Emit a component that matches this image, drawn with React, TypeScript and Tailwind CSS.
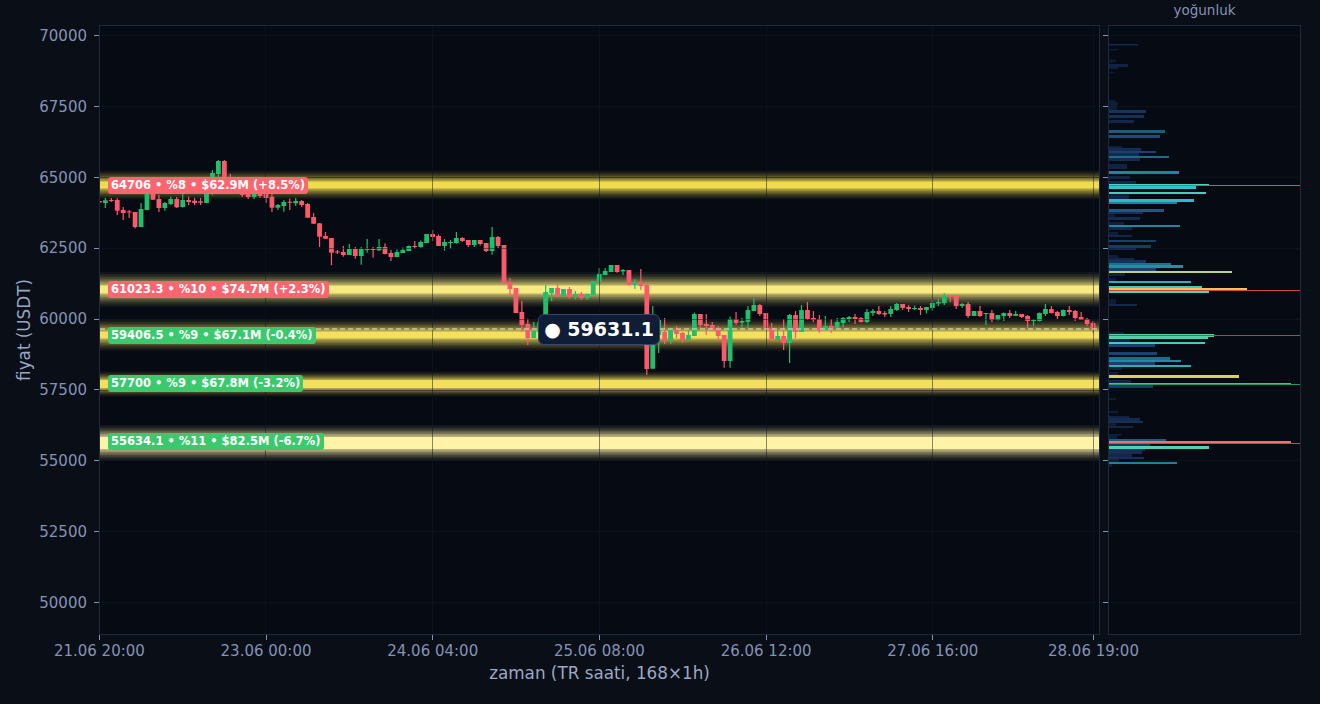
type Candle = [number, number, number, number, number];

// up(1)/down(0), high, body top, body bottom, low - all in page pixels
const candles: Candle[] = [
  [0, 200, 201, 202.5, 204], [1, 198, 200.3, 203, 208], [0, 198, 200, 201, 202], [0, 198, 200, 210.7, 215],
  [0, 207, 210, 213, 220], [0, 210, 211.5, 212.5, 218], [0, 212, 212, 227, 228.5], [1, 203, 209, 227, 227],
  [1, 190, 192, 210, 210], [0, 190, 192, 199.7, 200], [0, 195, 199, 208, 212], [1, 202, 203, 208, 210.7],
  [1, 196.7, 199, 204, 205], [0, 197, 199, 207.3, 208], [1, 194, 200, 207, 207.5], [0, 196.7, 200, 202, 205],
  [0, 198, 200.7, 203, 205], [0, 198, 201.3, 202.7, 205], [1, 190, 190, 203, 203], [1, 170, 173, 190, 195],
  [1, 160, 161, 174, 178], [0, 160, 161, 183, 186], [0, 174, 178, 186, 190], [0, 184, 186, 191, 193],
  [0, 187, 190, 195, 197], [0, 189, 192, 197, 199], [1, 190, 193, 197, 199], [0, 190, 193, 196, 198],
  [0, 190, 194, 198, 203], [0, 194, 196.7, 207.7, 212], [1, 204, 205, 207.7, 210], [1, 200, 202, 206, 211.7],
  [0, 198.5, 201.7, 202.3, 210], [1, 198, 201, 203.3, 206], [0, 200, 201, 205, 207], [0, 203, 204, 217.7, 218],
  [0, 213, 217, 223.7, 224], [0, 223, 223.3, 236.7, 247], [0, 232, 236, 238.7, 239], [0, 238, 238, 252.7, 265.3],
  [0, 250, 251.5, 252.5, 254], [0, 246, 252, 255, 256.7], [1, 244, 249, 255, 255], [0, 247, 249, 256, 258.7],
  [1, 247, 249, 256, 264.7], [1, 239, 249, 249.7, 252.7], [0, 247, 249, 249.7, 257.7], [1, 239, 247, 250.3, 251],
  [0, 243.3, 247, 254, 254.3], [0, 250, 253, 257, 261], [1, 249.5, 252, 257, 257], [1, 247.5, 250, 253, 253],
  [1, 245.5, 246, 251, 251], [0, 241, 246, 246.7, 248.7], [1, 240.5, 242, 247, 247.7], [1, 234, 234, 243, 243],
  [0, 230, 234, 237, 241], [0, 234.5, 236, 246, 246], [1, 239, 242, 246, 250.7], [1, 240, 242, 242.7, 248.7],
  [1, 232, 238, 243, 243.7], [0, 237, 238, 241, 242], [0, 240, 240, 245, 247], [1, 240, 240, 245, 247],
  [0, 240, 240, 244, 245.5], [0, 243, 243, 251, 252], [1, 227, 237, 251, 254.7], [0, 236, 237, 246, 248],
  [0, 245, 245, 283, 284.7], [0, 278, 282, 289, 296], [0, 288, 288, 313, 313], [0, 301, 312, 325, 332],
  [0, 318.7, 324, 338, 345], [1, 322, 331, 338, 338], [1, 318, 322, 332, 340], [1, 285, 292, 330, 330],
  [1, 288, 288, 293, 301], [0, 284, 288, 296, 297], [1, 289, 289, 296, 297], [0, 287, 289, 297, 298.5],
  [1, 291, 294, 296, 299.5], [0, 292, 294, 298, 300], [1, 294, 294, 298, 300], [1, 281, 281, 295, 296],
  [1, 268, 274, 282, 282], [1, 268, 271, 275, 275], [1, 265, 265, 272, 272], [0, 265, 265, 272, 272.7],
  [1, 269, 270, 271.5, 275], [0, 270, 270, 285, 285], [1, 279, 283, 285, 289], [0, 269, 283, 286, 290],
  [0, 282, 285, 369, 375], [1, 306, 330, 368.7, 368.7], [1, 318, 320, 335, 353], [0, 318, 332, 340, 344],
  [1, 328, 330, 340, 344], [0, 326, 330, 334, 338], [0, 332, 333, 340, 343], [1, 328, 335, 340, 340],
  [1, 312.5, 314, 336, 336], [0, 314, 314, 325, 327.7], [0, 314, 324, 326, 335], [0, 322, 325, 330, 331],
  [0, 326, 329, 336, 341], [0, 335, 335, 361, 367.7], [1, 316.7, 319, 361, 367.7], [0, 312, 319, 323, 325],
  [1, 318, 321, 322.7, 328], [1, 306, 310, 322, 328], [1, 298, 305, 311, 311], [0, 304, 305, 314, 316],
  [0, 313, 313, 329, 329], [0, 323, 328, 339, 341], [1, 330, 336, 340, 340], [0, 319, 336, 343, 350],
  [1, 314, 315, 343, 363], [0, 311, 315, 332, 338], [1, 305, 310, 332, 332], [0, 302, 310, 319, 320],
  [0, 311, 318, 320, 322], [0, 315, 319, 330, 333], [1, 316, 326, 330, 330], [0, 319, 326, 328, 333],
  [1, 318, 322, 328, 328], [1, 317, 318, 323, 327], [1, 316, 317, 319, 322], [0, 314, 317, 319, 324],
  [0, 317, 318, 322, 322.5], [1, 309, 312, 322, 323], [1, 309, 311, 313, 316], [0, 306, 311, 314, 315],
  [0, 311, 313, 314.5, 317], [1, 306, 309, 314, 317], [1, 303, 304, 310, 311], [0, 304, 304, 308, 310],
  [0, 305, 307, 309, 312], [1, 305.5, 308, 309, 310], [0, 306, 308, 310, 315], [1, 307, 307, 310, 313.5],
  [1, 300, 303, 308, 311], [1, 299, 302, 303.5, 306], [1, 293, 296, 303, 305], [0, 296, 296, 297, 302],
  [0, 296, 296, 306, 309], [1, 303, 304, 306, 308], [0, 302, 304, 316, 318], [1, 311, 311, 316, 316],
  [0, 306, 311, 316, 317], [1, 313, 313, 314, 325], [0, 310, 313, 320, 322], [1, 315, 315, 320, 320.5],
  [1, 312.5, 313, 316, 321], [0, 310, 313, 316, 318], [1, 311, 314, 316, 316], [0, 314, 314, 317, 318],
  [0, 315, 316, 321, 328], [1, 319, 320, 320.7, 326], [1, 312.5, 313, 321, 321.5], [1, 304, 309, 314, 316],
  [0, 306, 309, 313, 313.5], [0, 311, 312, 316, 319], [1, 309.5, 310, 316, 316.5], [0, 306, 310, 312, 315],
  [0, 310, 311, 318, 321], [0, 312, 317, 320, 320], [0, 318, 319, 324, 326], [0, 321, 323, 329, 333],
];

// center, outer half height, core half height, core colour
const bands: [number, number, number, string][] = [
  [185, 14.5, 3.5, "#f0dc4e"],
  [289.5, 17.5, 4, "#f8ea80"],
  [335, 16, 3.5, "#f3e060"],
  [384, 12.5, 4, "#f3df5e"],
  [443, 18, 6, "#fef3a6"],
];
const glow = [0.05, 0.06, 0.08, 0.1, 0.14, 0.18, 0.24, 0.3];

const priceTicks = ["70000", "67500", "65000", "62500", "60000", "57500", "55000", "52500", "50000"];
const tickYs = [35.5, 106.5, 177.5, 248.5, 319.5, 390.5, 460.5, 531.5, 602.5];
const timeTicks = ["21.06 20:00", "23.06 00:00", "24.06 04:00", "25.06 08:00", "26.06 12:00", "27.06 16:00"];
const gridXs = [265.5, 432.5, 599.5, 766.5, 932.5, 1093.5];

const levels = [
  { text: "64706 • %8 • $62.9M (+8.5%)", cls: "top-[152px] bg-[#fb6570]" },
  { text: "61023.3 • %10 • $74.7M (+2.3%)", cls: "top-[256px] bg-[#fb6570]" },
  { text: "59406.5 • %9 • $67.1M (-0.4%)", cls: "top-[302px] bg-[#3cc86c]" },
  { text: "57700 • %9 • $67.8M (-3.2%)", cls: "top-[350px] bg-[#3cc86c]" },
  { text: "55634.1 • %11 • $82.5M (-6.7%)", cls: "top-[408px] bg-[#3cc86c]" },
];

// y, height, width of each volume bar
const bars: [number, number, number][] = [
  [44, 1.5, 29], [49, 1.5, 9], [59.5, 2.5, 7], [62, 1, 3], [64, 3, 19], [67, 2, 9], [72, 1.5, 5],
  [100, 2, 6], [102, 3, 9], [105, 5, 8], [110, 3, 37], [115, 3, 35], [120, 3, 25], [130, 3, 56], [135, 3, 51],
  [146, 2, 13], [148, 3, 32], [151, 2, 47], [153, 3, 30], [156, 2, 60], [158, 3, 31], [164, 5, 18], [171, 3, 70],
  [176, 3, 21], [181, 3, 27], [184, 2, 100], [186, 3, 87], [192, 2, 97], [194.5, 4.5, 20], [199, 3, 85], [202, 2, 68],
  [209, 3, 55], [212, 2, 34], [214, 3, 6], [217, 3, 31], [222, 3, 15], [225, 2, 71], [227, 3, 23], [232, 3, 9], [235, 2, 23],
  [240, 2, 47], [245, 3, 42], [248, 2, 27], [255, 3, 9], [258, 2, 25], [260, 3, 37], [263, 2, 62], [265, 3, 74],
  [268, 3, 47], [271, 2, 123], [273, 3, 16], [278, 3, 7], [281, 2, 82], [286, 2, 93], [288, 2, 138], [291, 2, 100],
  [299, 5, 7], [304, 2, 28], [332, 2, 15], [334, 3, 105], [337, 2, 99], [339, 3, 21], [342, 2, 96], [344, 3, 46],
  [352, 3, 48], [357, 3, 61], [360, 2, 72], [362, 3, 46], [365, 2, 82], [367, 3, 13], [372, 3, 9], [375, 3, 130],
  [380, 3, 22], [383, 2, 182], [385, 3, 44], [398, 2, 7], [411, 2, 9], [416, 2, 20], [418, 3, 31], [421, 2, 34],
  [423, 3, 7], [426, 2, 24], [434, 2, 12], [436, 3, 8], [439, 2, 57], [441, 3, 182], [444, 2, 41], [446, 3, 100],
  [449, 2, 36], [451, 3, 33], [454, 3, 23], [457, 2, 35], [459, 3, 10], [462, 2, 68], [464, 3, 3],
];

const scale: [number, number[]][] = [
  [0, [12, 24, 46]], [30, [20, 42, 78]], [47, [26, 64, 110]], [62, [30, 112, 144]], [74, [30, 144, 168]],
  [87, [44, 196, 204]], [100, [80, 208, 180]], [105, [92, 208, 156]], [123, [196, 208, 128]], [130, [224, 204, 96]],
  [138, [255, 190, 80]], [182, [240, 112, 112]],
];

function barColor(w: number) {
  let i = 0;
  while (i < scale.length - 2 && w > scale[i + 1][0]) i++;
  const [w0, c0] = scale[i];
  const [w1, c1] = scale[i + 1];
  const t = Math.min(1, (w - w0) / (w1 - w0));
  return `rgb(${c0.map((v, k) => Math.round(v + (c1[k] - v) * t)).join(",")})`;
}

const gridLine = "rgba(14,24,38,0.5)";

function PricePlot() {
  return (
    <svg viewBox="99 25 1001 610" className="block h-full w-full">
      <rect x="99" y="25" width="1001" height="610" fill="#060a13" />
      {bands.map(([c, outer, core, color]) => (
        <g key={c}>
          {glow.map((o, k) => {
            const half = outer - ((outer - core) * k) / glow.length;
            return <rect key={k} x="100" y={c - half} width="999" height={half * 2} fill={color} opacity={o} />;
          })}
          <rect x="100" y={c - core} width="999" height={core * 2} fill={color} />
        </g>
      ))}
      {candles.map(([up, high, top, bottom, low], i) => {
        const x = 99.4 + 5.95 * i;
        const color = up ? "#20bf6b" : "#fb5a6c";
        return (
          <g key={i} fill={color}>
            <rect x={x - 0.6} y={high} width="1.2" height={low - high} />
            <rect x={x - 2.4} y={top} width="4.8" height={Math.max(bottom - top, 1)} />
          </g>
        );
      })}
      {tickYs.map((y) => (
        <line key={y} x1="100" x2="1099" y1={y} y2={y} stroke={gridLine} />
      ))}
      {gridXs.map((x) => (
        <line key={x} x1={x} x2={x} y1="26" y2="634" stroke={gridLine} />
      ))}
      <line x1="100" x2="1099" y1="329" y2="329" stroke="#e2e0cc" strokeOpacity="0.7" strokeWidth="1.3" strokeDasharray="5 3" />
      <rect x="99.5" y="25.5" width="1000" height="609" fill="none" stroke="#1e293b" />
    </svg>
  );
}

function VolumePlot() {
  return (
    <svg viewBox="1108 25 193 610" className="block h-full w-full">
      <rect x="1108" y="25" width="193" height="610" fill="#060a13" />
      {tickYs.map((y) => (
        <line key={y} x1="1109" x2="1300" y1={y} y2={y} stroke={gridLine} />
      ))}
      {bars.map(([y, h, w]) => (
        <rect key={y} x="1109" y={y} width={w} height={h} fill={barColor(w)} />
      ))}
      <rect x="1109" y="185" width="191" height="1" fill="#c9545c" />
      <rect x="1109" y="290" width="191" height="1" fill="#c9444c" />
      <rect x="1109" y="335" width="191" height="1" fill="#1f8a5a" />
      <rect x="1109" y="384" width="191" height="1" fill="#1f9a62" />
      <rect x="1109" y="443" width="191" height="1" fill="#1f9a62" />
      <rect x="1108.5" y="25.5" width="192" height="609" fill="none" stroke="#1e293b" />
    </svg>
  );
}

export default function App() {
  return (
    <div className="h-[704px] w-[1320px] overflow-hidden bg-[#0a0e17] font-['DejaVu_Sans',sans-serif] text-[15px] text-[#8493b5]">
      <div className="grid grid-cols-[99px_1001px_8px_193px] grid-rows-[25px_610px_auto_auto]">
        <div className="col-start-4 flex items-center justify-center pb-[5px] text-[13.5px]">yoğunluk</div>

        <div className="row-start-2 flex">
          <div className="mr-[-11px] flex w-[50px] shrink-0 items-center justify-center">
            <span className="rotate-180 text-[16.8px] text-[#9aa8c4] [writing-mode:vertical-rl]">fiyat (USDT)</span>
          </div>
          <div className="flex h-[588px] flex-1 flex-col justify-between">
            {priceTicks.map((p) => (
              <div key={p} className="flex h-[21px] items-center justify-end">
                <span className="pt-px">{p}</span>
                <span className="ml-[7px] h-px w-[5px] bg-[#8493b5]" />
              </div>
            ))}
          </div>
        </div>

        <div className="relative row-start-2">
          <PricePlot />
          {levels.map((l) => (
            <div
              key={l.text}
              className={`absolute left-[9px] rounded-[3px] px-[3px] text-[11.5px] leading-[17px] font-bold whitespace-nowrap text-white ${l.cls}`}
            >
              {l.text}
            </div>
          ))}
          <div className="absolute top-[289px] left-[439px] flex h-[31px] w-[122px] items-center justify-center rounded-[6px] border-[1.5px] border-[#33466a] bg-[#0f1d36] text-[19px] font-bold whitespace-nowrap text-white">
            ● 59631.1
          </div>
        </div>

        <div className="row-start-2 flex h-[588px] flex-col justify-between">
          {tickYs.map((y) => (
            <div key={y} className="flex h-[21px] items-center justify-end">
              <span className="h-px w-[5px] bg-[#8493b5]" />
            </div>
          ))}
        </div>

        <div className="row-start-2">
          <VolumePlot />
        </div>

        <div className="col-start-2 row-start-3 ml-[-83px] flex">
          {timeTicks.map((t) => (
            <div key={t} className="flex w-[166.7px] shrink-0 flex-col items-center">
              <span className="h-[5px] w-px bg-[#8493b5]" />
              <span className="mt-[1px] leading-[20px]">{t}</span>
            </div>
          ))}
          <div className="ml-[-6px] flex w-[166.7px] shrink-0 flex-col items-center">
            <span className="h-[5px] w-px bg-[#8493b5]" />
            <span className="mt-[1px] leading-[20px]">28.06 19:00</span>
          </div>
        </div>

        <div className="col-start-2 row-start-4 mt-[1px] text-center text-[16.8px] leading-[22px] text-[#9aa8c4]">
          zaman (TR saati, 168×1h)
        </div>
      </div>
    </div>
  );
}
